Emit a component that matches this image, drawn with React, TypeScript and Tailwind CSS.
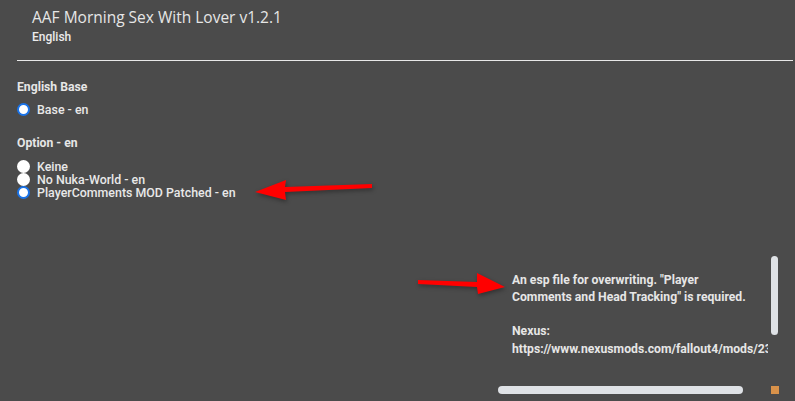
import React from "react";

type Opt = { label: string; checked?: boolean };

const baseOpts: Opt[] = [{ label: "Base - en", checked: true }];
const extraOpts: Opt[] = [
  { label: "Keine" },
  { label: "No Nuka-World - en" },
  { label: "PlayerComments MOD Patched - en", checked: true },
];

const Radio: React.FC<{ checked?: boolean }> = ({ checked }) =>
  checked ? (
    <span className="box-border block h-[13px] w-[13px] rounded-full border-[2px] border-[#1a73e8] bg-white" />
  ) : (
    <span className="block h-[13px] w-[13px] rounded-full bg-white" />
  );

const RadioRow: React.FC<Opt> = ({ label, checked }) => (
  <div className="flex h-[13px] items-center gap-[7px]">
    <Radio checked={checked} />
    <span className="text-[12.4px] font-medium leading-[13px] text-[#e8e8e8]">{label}</span>
  </div>
);

// red pointer arrows drawn over the page
const Arrows: React.FC = () => (
  <svg
    className="pointer-events-none absolute left-0 top-0"
    width="795"
    height="401"
    style={{ filter: "drop-shadow(1px 2px 2px rgba(0,0,0,0.35))" }}
  >
    <polygon points="372,184 372,188 285,192 286,200 255,192 286,180 285,187" fill="#ff0000" />
    <polygon points="418,280 418,284 477,287 478,294 505,287 477,273 477,282" fill="#ff0000" />
  </svg>
);

const App: React.FC = () => {
  return (
    <div
      className="relative h-[401px] w-[795px] overflow-hidden bg-[#4b4b4b]"
      style={{ fontFamily: "Roboto, 'Liberation Sans', sans-serif" }}
    >
      <div className="pl-[32px] pt-[4px]">
        <div
          className="text-[15.5px] leading-[26px] text-[#e6e6e6]"
          style={{ fontFamily: "'Open Sans', sans-serif" }}
        >
          AAF Morning Sex With Lover v1.2.1
        </div>
        <div className="text-[12px] font-medium leading-[14px] text-[#ececec]">English</div>
      </div>
      <div className="ml-[17px] mr-[2px] mt-[16px] h-[1px] bg-[#e8e8e8]" />

      <div className="px-[17px] pt-[19px]">
        <div className="text-[12.2px] font-bold leading-[14px] text-[#e6e6e6]">English Base</div>
        <div className="mt-[9px]">
          {baseOpts.map((o) => (
            <RadioRow key={o.label} {...o} />
          ))}
        </div>
        <div className="mt-[20px] text-[12.2px] font-bold leading-[14px] text-[#e6e6e6]">Option - en</div>
        <div className="mt-[10px]">
          {extraOpts.map((o) => (
            <RadioRow key={o.label} {...o} />
          ))}
        </div>
      </div>

      {/* description box with its scrollbars */}
      <div className="ml-[498px] mt-[57px] grid w-[281px] grid-cols-[1fr_9px] grid-rows-[125px_9px] gap-x-[2px] gap-y-[4px]">
        <div className="overflow-hidden pl-[14px] pt-[16px]">
          <div className="whitespace-nowrap text-[12.2px] font-bold leading-[17px] text-[#e6e6e6]">
            <div>An esp file for overwriting. "Player</div>
            <div>Comments and Head Tracking" is required.</div>
            <div className="h-[17px]" />
            <div>Nexus:</div>
            <div className="mt-[1px]">https://www.nexusmods.com/fallout4/mods/23985</div>
          </div>
        </div>
        <div>
          <div className="ml-[1px] h-[79px] w-[7px] rounded-full bg-[#dfe2e6]" />
        </div>
        <div className="pt-[1px]">
          <div className="h-[8px] w-[245px] rounded-full bg-[#dfe2e6]" />
        </div>
        <div className="pt-[1px]">
          <div className="ml-[1px] h-[8px] w-[8px] bg-[#d9924a]" />
        </div>
      </div>

      <Arrows />
    </div>
  );
};

export default App;
